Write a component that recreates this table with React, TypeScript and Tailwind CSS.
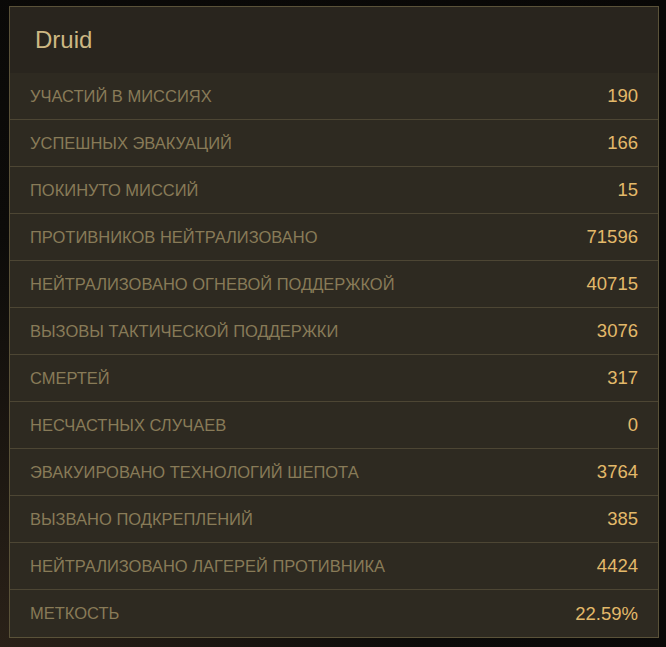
import React from "react";

const rows: [string, string][] = [
  ["УЧАСТИЙ В МИССИЯХ", "190"],
  ["УСПЕШНЫХ ЭВАКУАЦИЙ", "166"],
  ["ПОКИНУТО МИССИЙ", "15"],
  ["ПРОТИВНИКОВ НЕЙТРАЛИЗОВАНО", "71596"],
  ["НЕЙТРАЛИЗОВАНО ОГНЕВОЙ ПОДДЕРЖКОЙ", "40715"],
  ["ВЫЗОВЫ ТАКТИЧЕСКОЙ ПОДДЕРЖКИ", "3076"],
  ["СМЕРТЕЙ", "317"],
  ["НЕСЧАСТНЫХ СЛУЧАЕВ", "0"],
  ["ЭВАКУИРОВАНО ТЕХНОЛОГИЙ ШЕПОТА", "3764"],
  ["ВЫЗВАНО ПОДКРЕПЛЕНИЙ", "385"],
  ["НЕЙТРАЛИЗОВАНО ЛАГЕРЕЙ ПРОТИВНИКА", "4424"],
  ["МЕТКОСТЬ", "22.59%"],
];

export default function App() {
  return (
    <div
      className="w-[666px] h-[647px] overflow-hidden pt-[6px] pl-[9px] bg-[radial-gradient(ellipse_at_0%_100%,#2a2118_0%,#0c0b09_45%,#080706_100%)]"
      style={{ fontFamily: '"Liberation Sans", Arial, sans-serif' }}
    >
      <div className="w-[650px] border border-[#5a5239] bg-[#2e2a21]">
        <div className="h-[66px] bg-[#29251e] flex items-center pl-[25px] text-[24px] text-[#cdb883]">
          Druid
        </div>
        {rows.map(([label, value], i) => (
          <div
            key={label}
            className={
              "h-[47px] flex items-center justify-between pl-[20px] pr-[20px] " +
              (i < rows.length - 1 ? "border-b border-[#4d4634]" : "")
            }
          >
            <span className="text-[16.5px] text-[#887b58]">{label}</span>
            <span className="text-[18.5px] text-[#e3b96a]">{value}</span>
          </div>
        ))}
      </div>
    </div>
  );
}
